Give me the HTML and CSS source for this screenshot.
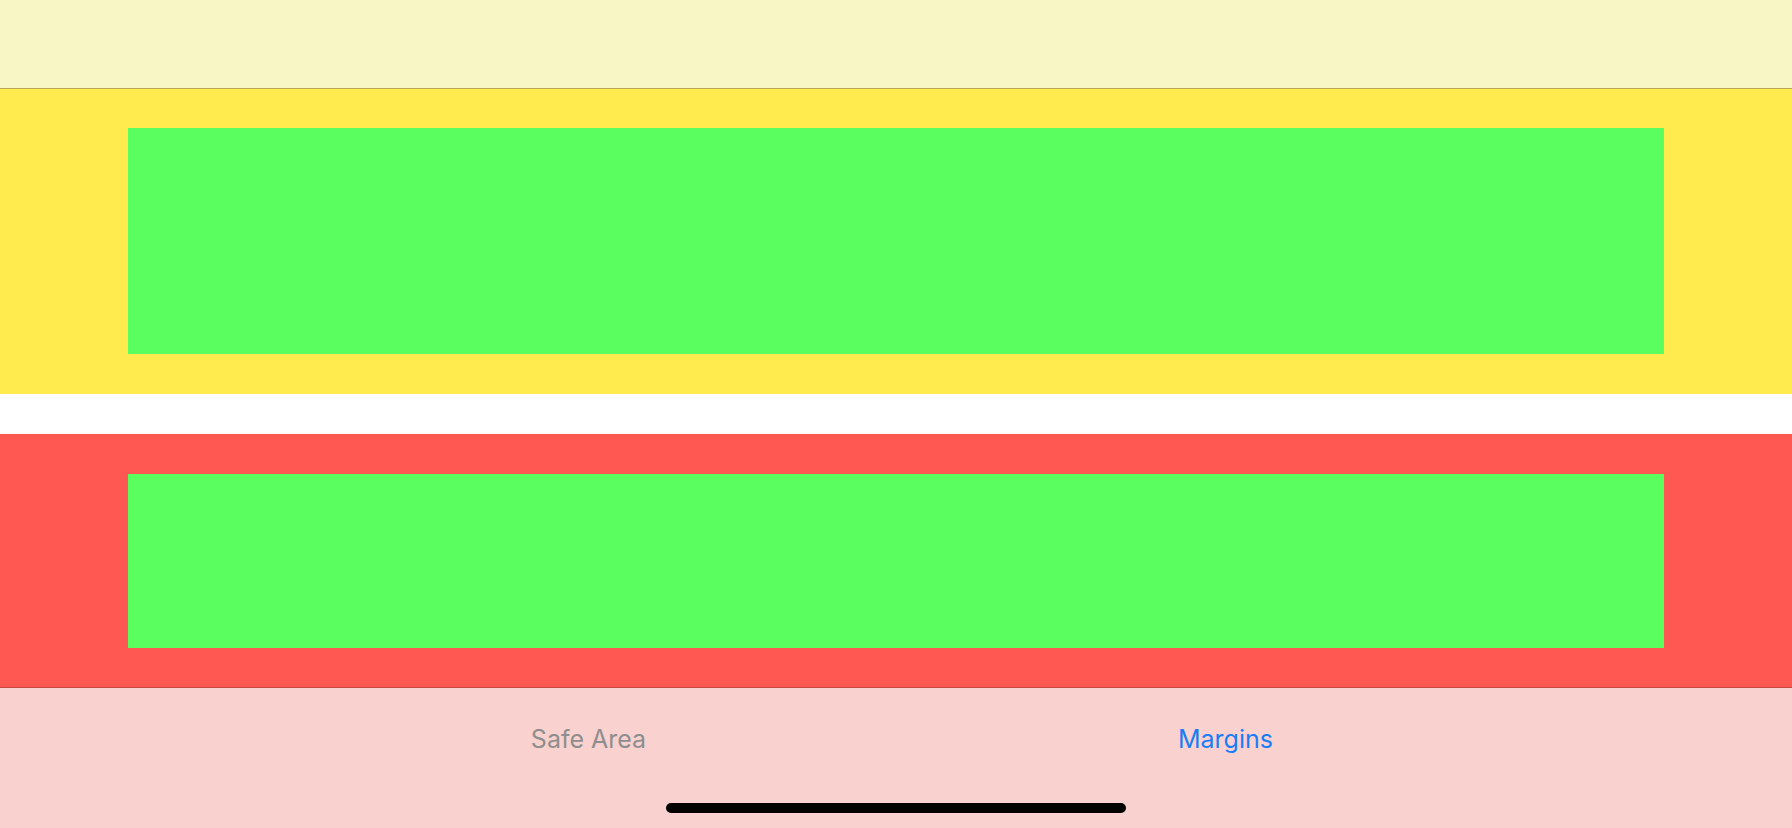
FILE: index.html
```html
<!DOCTYPE html>
<html>
<head>
<meta charset="utf-8">
<link rel="stylesheet" href="styles.css">
</head>
<body>
<div class="screen">
  <div class="navbar"></div>
  <div class="panel yellow"><div class="inner tall"></div></div>
  <div class="spacer"></div>
  <div class="panel red"><div class="inner short"></div></div>
  <div class="tabbar">
    <div class="tabs">
      <div class="tab">Safe Area</div>
      <div class="tab active">Margins</div>
    </div>
    <div class="home-wrap"><div class="home"></div></div>
  </div>
</div>
</body>
</html>
```
FILE: styles.css
```css
html, body {
  margin: 0;
  padding: 0;
  width: 1792px;
  height: 828px;
  overflow: hidden;
  background: #ffffff;
  font-family: Inter, "Noto Sans", sans-serif;
}
.screen {
  display: flex;
  flex-direction: column;
  width: 1792px;
  height: 828px;
}
.navbar {
  height: 88px;
  background: #f9f6c6;
  border-bottom: 1px solid #b8a850;
  flex: none;
}
.panel {
  padding: 0 128px;
  flex: none;
}
.yellow {
  background: #ffeb4d;
  padding-top: 39px;
  padding-bottom: 40px;
}
.red {
  background: #ff5852;
  padding-top: 40px;
  padding-bottom: 39px;
  border-bottom: 1px solid #c8463f;
}
.inner {
  background: #5aff5f;
}
.tall { height: 226px; }
.short { height: 174px; }
.spacer {
  height: 40px;
  flex: none;
}
.tabbar {
  flex: 1;
  background: #f9d1cf;
  display: flex;
  flex-direction: column;
}
.tabs {
  display: grid;
  grid-template-columns: 637px 637px;
  padding-left: 270px;
  padding-top: 36px;
}
.tab {
  text-align: center;
  font-size: 25px;
  line-height: 30px;
  color: #8e8e8e;
}
.tab.active {
  color: #1a7ef5;
}
.home-wrap {
  display: flex;
  justify-content: center;
  padding-top: 49px;
}
.home {
  width: 460px;
  height: 10px;
  border-radius: 5px;
  background: #000000;
}
```
